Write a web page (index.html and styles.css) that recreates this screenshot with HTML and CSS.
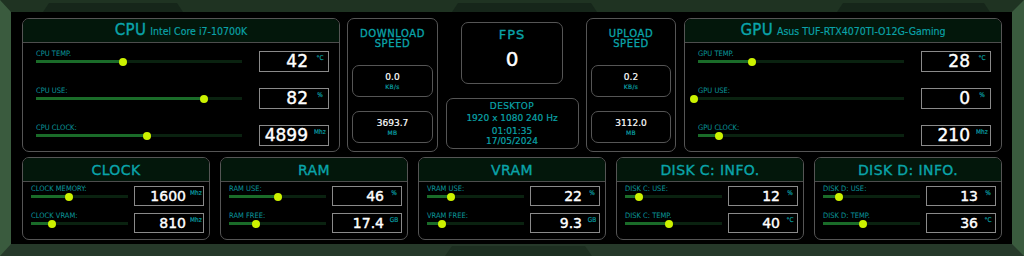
FILE: index.html
```html
<!DOCTYPE html>
<html>
<head>
<meta charset="utf-8">
<link rel="stylesheet" href="styles.css">
</head>
<body>
<div class="frame">
  <i class="deco deco-t1"></i>
  <i class="deco deco-t2"></i>
  <i class="deco deco-t3"></i>
  <i class="deco deco-b1"></i>

  <div class="top-row">
    <section class="panel big">
      <header class="ph"><span class="ph-main">CPU</span><span class="ph-sub">Intel Core i7-10700K</span></header>
      <div class="big-body">
        <div class="row">
          <div class="meter"><div class="lbl">CPU TEMP.</div><div class="slider" style="--v:42%"></div></div>
          <div class="vbox"><span class="val">42</span><span class="unit">°C</span></div>
        </div>
        <div class="row">
          <div class="meter"><div class="lbl">CPU USE:</div><div class="slider" style="--v:81.5%"></div></div>
          <div class="vbox"><span class="val">82</span><span class="unit">%</span></div>
        </div>
        <div class="row">
          <div class="meter"><div class="lbl">CPU CLOCK:</div><div class="slider" style="--v:54%"></div></div>
          <div class="vbox"><span class="val">4899</span><span class="unit">Mhz</span></div>
        </div>
      </div>
    </section>

    <section class="panel net">
      <div class="net-title">DOWNLOAD<br>SPEED</div>
      <div class="sbox"><span class="sval">0.0</span><span class="sunit">KB/s</span></div>
      <div class="sbox"><span class="sval">3693.7</span><span class="sunit">MB</span></div>
    </section>

    <div class="center">
      <div class="fps">
        <div class="fps-title">FPS</div>
        <div class="fps-val">0</div>
      </div>
      <div class="desk">
        <div class="desk-title">DESKTOP</div>
        <div class="desk-res">1920 x 1080 240 Hz</div>
        <div class="desk-time">01:01:35</div>
        <div class="desk-date">17/05/2024</div>
      </div>
    </div>

    <section class="panel net net-up">
      <div class="net-title">UPLOAD<br>SPEED</div>
      <div class="sbox"><span class="sval">0.2</span><span class="sunit">KB/s</span></div>
      <div class="sbox"><span class="sval">3112.0</span><span class="sunit">MB</span></div>
    </section>

    <section class="panel big gpu">
      <header class="ph"><span class="ph-main">GPU</span><span class="ph-sub">Asus TUF-RTX4070TI-O12G-Gaming</span></header>
      <div class="big-body">
        <div class="row">
          <div class="meter"><div class="lbl">GPU TEMP.</div><div class="slider" style="--v:26%"></div></div>
          <div class="vbox"><span class="val">28</span><span class="unit">°C</span></div>
        </div>
        <div class="row">
          <div class="meter"><div class="lbl">GPU USE:</div><div class="slider" style="--v:-2%"></div></div>
          <div class="vbox"><span class="val">0</span><span class="unit">%</span></div>
        </div>
        <div class="row">
          <div class="meter"><div class="lbl">GPU CLOCK:</div><div class="slider" style="--v:10%"></div></div>
          <div class="vbox"><span class="val">210</span><span class="unit">Mhz</span></div>
        </div>
      </div>
    </section>
  </div>

  <div class="bottom-row">
    <section class="panel small">
      <header class="ph"><span class="ph-title">CLOCK</span></header>
      <div class="small-body">
        <div class="row">
          <div class="meter"><div class="lbl">CLOCK MEMORY:</div><div class="slider" style="--v:39%"></div></div>
          <div class="vbox"><span class="val">1600</span><span class="unit">Mhz</span></div>
        </div>
        <div class="row">
          <div class="meter"><div class="lbl">CLOCK VRAM:</div><div class="slider" style="--v:22%"></div></div>
          <div class="vbox"><span class="val">810</span><span class="unit">Mhz</span></div>
        </div>
      </div>
    </section>

    <section class="panel small">
      <header class="ph"><span class="ph-title">RAM</span></header>
      <div class="small-body">
        <div class="row">
          <div class="meter"><div class="lbl">RAM USE:</div><div class="slider" style="--v:51%"></div></div>
          <div class="vbox"><span class="val">46</span><span class="unit">%</span></div>
        </div>
        <div class="row">
          <div class="meter"><div class="lbl">RAM FREE:</div><div class="slider" style="--v:28%"></div></div>
          <div class="vbox"><span class="val">17.4</span><span class="unit">GB</span></div>
        </div>
      </div>
    </section>

    <section class="panel small">
      <header class="ph"><span class="ph-title">VRAM</span></header>
      <div class="small-body">
        <div class="row">
          <div class="meter"><div class="lbl">VRAM USE:</div><div class="slider" style="--v:24.5%"></div></div>
          <div class="vbox"><span class="val">22</span><span class="unit">%</span></div>
        </div>
        <div class="row">
          <div class="meter"><div class="lbl">VRAM FREE:</div><div class="slider" style="--v:15%"></div></div>
          <div class="vbox"><span class="val">9.3</span><span class="unit">GB</span></div>
        </div>
      </div>
    </section>

    <section class="panel small">
      <header class="ph"><span class="ph-title">DISK C: INFO.</span></header>
      <div class="small-body">
        <div class="row">
          <div class="meter"><div class="lbl">DISK C: USE:</div><div class="slider" style="--v:14%"></div></div>
          <div class="vbox"><span class="val">12</span><span class="unit">%</span></div>
        </div>
        <div class="row">
          <div class="meter"><div class="lbl">DISK C: TEMP.</div><div class="slider" style="--v:45%"></div></div>
          <div class="vbox"><span class="val">40</span><span class="unit">°C</span></div>
        </div>
      </div>
    </section>

    <section class="panel small">
      <header class="ph"><span class="ph-title">DISK D: INFO.</span></header>
      <div class="small-body">
        <div class="row">
          <div class="meter"><div class="lbl">DISK D: USE:</div><div class="slider" style="--v:16%"></div></div>
          <div class="vbox"><span class="val">13</span><span class="unit">%</span></div>
        </div>
        <div class="row">
          <div class="meter"><div class="lbl">DISK D: TEMP.</div><div class="slider" style="--v:41%"></div></div>
          <div class="vbox"><span class="val">36</span><span class="unit">°C</span></div>
        </div>
      </div>
    </section>
  </div>
</div>
</body>
</html>
```

FILE: styles.css
```css
* { box-sizing: border-box; margin: 0; padding: 0; }

html, body {
  width: 1024px;
  height: 256px;
  background: #000;
  overflow: hidden;
}

body {
  font-family: "DejaVu Sans", sans-serif;
  color: #0aa4aa;
}

.frame {
  position: relative;
  width: 1024px;
  height: 256px;
  border-style: solid;
  border-width: 12px 12px 12px 11px;
  border-color: #1f3322 #3a5b3e #26392a #3a5b3e;
  background: #000;
  padding: 6px 10px 4px 11px;
  display: flex;
  flex-direction: column;
  gap: 5px;
}

.deco {
  position: absolute;
  display: block;
  background: #16261a;
  clip-path: polygon(6px 0, calc(100% - 6px) 0, 100% 100%, 0 100%);
}
.deco-t1 { top: -9px; height: 9px; left: 32px; width: 140px; }
.deco-t2 { top: -9px; height: 9px; left: 441px; width: 145px; }
.deco-t3 { top: -9px; height: 9px; left: 826px; width: 153px; }
.deco-b1 {
  bottom: -12px; height: 10px; left: 434px; width: 147px;
  background: #1d2f21;
  clip-path: polygon(7px 0, calc(100% - 7px) 0, 100% 100%, 0 100%);
}

.top-row {
  display: flex;
  height: 134px;
}

.bottom-row {
  display: flex;
  gap: 10px;
  height: 83px;
}

.panel {
  border: 1px solid #555;
  border-radius: 7px;
  background: #000;
  display: flex;
  flex-direction: column;
  overflow: hidden;
}

.big { width: 318px; height: 134px; }
.gpu { margin-left: 8px; }
.top-row > .big:first-child { margin-right: 7px; }

.ph {
  height: 24px;
  flex: none;
  background: #03170b;
  border-bottom: 1px solid #4d4d4d;
  display: flex;
  align-items: center;
  justify-content: center;
  gap: 4px;
  color: #0aa4aa;
}
.ph-main { font-size: 15px; line-height: 1; letter-spacing: 0.3px; -webkit-text-stroke: 0.35px currentColor; }
.ph-sub { font-family: "DejaVu Sans Condensed", "DejaVu Sans", sans-serif; font-size: 10.5px; line-height: 1; margin-top: 1px; -webkit-text-stroke: 0.15px currentColor; }
.ph-title { font-size: 14px; line-height: 1; letter-spacing: 0.4px; -webkit-text-stroke: 0.35px currentColor; }

.big-body {
  padding: 8px 10px 0 13px;
  display: flex;
  flex-direction: column;
  gap: 16px;
}
.big-body .row { height: 21px; }
.big-body .meter { margin-right: 17px; }
.big-body .vbox { height: 21px; }

.small { width: 188px; height: 83px; }
.small-body {
  padding: 4px 5px 0 8px;
  display: flex;
  flex-direction: column;
  gap: 7px;
}
.small-body .row { height: 20px; }
.small-body .meter { margin-right: 6px; }
.small-body .vbox { height: 20px; }
.small-body .val { font-size: 14px; margin-right: 3px; }
.small-body .unit { width: 14px; }

.row {
  display: flex;
  align-items: flex-start;
}

.meter {
  flex: 1;
  display: flex;
  flex-direction: column;
}

.lbl {
  font-family: "DejaVu Sans Condensed", "DejaVu Sans", sans-serif;
  font-size: 7.5px;
  line-height: 7px;
  margin-top: -1px;
  color: #0a979d;
  white-space: nowrap;
}

.slider {
  position: relative;
  height: 9px;
  background:
    linear-gradient(#1a6c29, #1a6c29) 0 50% / max(var(--v), 0px) 3px no-repeat,
    linear-gradient(#0a2210, #0a2210) 0 50% / 100% 3px no-repeat;
}
.slider::after {
  content: "";
  position: absolute;
  top: 0.5px;
  left: calc(var(--v) - 4px);
  width: 8px;
  height: 8px;
  border-radius: 50%;
  background: #ccf200;
}

.vbox {
  width: 70px;
  flex: none;
  border: 1px solid #8a8a8a;
  display: flex;
  justify-content: flex-end;
  align-items: center;
  background: #000;
}

.val {
  color: #fff;
  font-size: 17px;
  line-height: 1;
  margin-right: 4px;
  -webkit-text-stroke: 0.4px #fff;
}

.unit {
  width: 16px;
  align-self: flex-start;
  padding-top: 3px;
  font-family: "DejaVu Sans Condensed", "DejaVu Sans", sans-serif;
  font-size: 6.5px;
  line-height: 7px;
  text-align: center;
  color: #0aa4aa;
  -webkit-text-stroke: 0.15px currentColor;
}

.net {
  width: 91px;
  height: 134px;
  padding: 10px 4px 0 4px;
}
.net-up { width: 90px; }

.net-title {
  font-size: 10px;
  line-height: 10px;
  letter-spacing: 0.6px;
  text-align: center;
  color: #0aa4aa;
  -webkit-text-stroke: 0.3px currentColor;
}

.sbox {
  height: 32px;
  margin-top: 16px;
  border: 1px solid #555;
  border-radius: 7px;
  display: flex;
  flex-direction: column;
  align-items: center;
  justify-content: center;
}
.sbox + .sbox { margin-top: 14px; }

.sval {
  color: #fff;
  font-size: 9px;
  line-height: 9px;
  -webkit-text-stroke: 0.2px #fff;
}
.sunit {
  font-size: 6px;
  line-height: 6px;
  letter-spacing: 0.3px;
  margin-top: 2px;
  color: #0aa4aa;
  -webkit-text-stroke: 0.15px currentColor;
}

.center {
  width: 148px;
  display: flex;
  flex-direction: column;
  align-items: center;
  padding-top: 4px;
  gap: 14px;
}

.fps {
  width: 102px;
  height: 62px;
  border: 1px solid #555;
  border-radius: 7px;
  display: flex;
  flex-direction: column;
  align-items: center;
  padding-top: 5px;
}
.fps-title {
  font-size: 13px;
  line-height: 14px;
  letter-spacing: 1px;
  color: #0aa4aa;
  -webkit-text-stroke: 0.35px currentColor;
}
.fps-val {
  margin-top: 7px;
  font-size: 20px;
  line-height: 20px;
  color: #fff;
  -webkit-text-stroke: 0.4px #fff;
}

.desk {
  width: 133px;
  height: 51px;
  border: 1px solid #555;
  border-radius: 7px;
  display: flex;
  flex-direction: column;
  align-items: center;
  padding-top: 2px;
  color: #0aa4aa;
  font-size: 9px;
  line-height: 10px;
  -webkit-text-stroke: 0.2px currentColor;
}
.desk-title { letter-spacing: 0.4px; }
.desk-res { margin-top: 2px; }
.desk-time { margin-top: 3px; }
```
